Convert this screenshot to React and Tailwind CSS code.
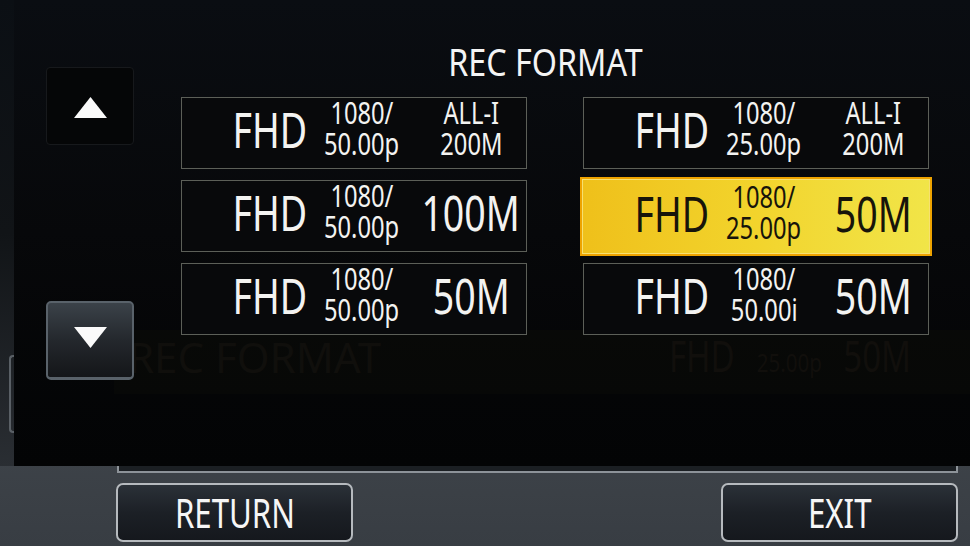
import React from "react";

const FONT = "font-['Noto_Sans','Open_Sans',sans-serif]";

function Tri({ down }) {
  return (
    <svg width="33" height="21" viewBox="0 0 33 21">
      {down ? (
        <polygon points="0,0 33,0 16.5,21" fill="#fafafa" />
      ) : (
        <polygon points="16.5,0 33,21 0,21" fill="#fafafa" />
      )}
    </svg>
  );
}

function Big({ children }) {
  return <span className="inline-block whitespace-nowrap scale-x-[0.75]">{children}</span>;
}

function Small({ children }) {
  return <span className="inline-block whitespace-nowrap scale-x-[0.79]">{children}</span>;
}

function Cell({ a, b, c, c2, selected }) {
  const two = c2 !== undefined;
  const outer = selected
    ? "-mx-[3px] -mt-[3px] -mb-[4px] h-[79px] border-2 border-[#eea300] bg-gradient-to-r from-[#efc01a] via-[#f2d42c] to-[#f1e548] text-[#17140a] shadow-[inset_0_0_0_1px_#f7e070]"
    : "h-[72px] border-[1.5px] border-[#5c5f58] bg-[#08090b] text-[#f3f3f1]";
  return (
    <div className={`${outer} flex items-center justify-center`}>
      <div className="w-[346px] h-[72px] shrink-0 flex">
        <div className="ml-[36px] w-[105px] flex justify-center pt-[7px] text-[50px] leading-[50px]">
          <Big>{a}</Big>
        </div>
        <div className="-ml-[4px] w-[88px] flex flex-col items-center text-[30px] leading-[31px]">
          <Small>1080/</Small>
          <Small>{b}</Small>
        </div>
        {two ? (
          <div className="ml-[9px] w-[112px] flex flex-col items-center text-[30px] leading-[31px]">
            <Small>{c}</Small>
            <Small>{c2}</Small>
          </div>
        ) : (
          <div className="ml-[9px] w-[112px] flex justify-center pt-[7px] text-[50px] leading-[50px]">
            <Big>{c}</Big>
          </div>
        )}
      </div>
    </div>
  );
}

function BottomButton({ children }) {
  return (
    <div className="w-[237px] h-[59px] rounded-[7px] border-2 border-[#b6babe] bg-gradient-to-b from-[#2b3138] via-[#1c2026] to-[#15181d] flex items-center justify-center text-[40px] leading-[40px] text-[#f6f6f6]">
      <span className="inline-block whitespace-nowrap scale-x-[0.78]">{children}</span>
    </div>
  );
}

export default function App() {
  return (
    <div
      className={`${FONT} w-[970px] h-[546px] overflow-hidden flex flex-col bg-gradient-to-b from-[#50565c] via-[#474d53] to-[#383d43] font-normal`}
    >
      {/* main dark area */}
      <div className="h-[466px] flex shrink-0">
        {/* left edge strip */}
        <div className="w-[14px] bg-gradient-to-b from-[#0b0f14] via-[#111417] to-[#2a2e33] flex flex-col">
          <div className="mt-[355px] ml-[9px] w-[5px] h-[78px] rounded-l-[4px] border-l-2 border-y-2 border-[#5a6066]" />
        </div>
        {/* black panel */}
        <div className="relative flex-1 flex bg-gradient-to-b from-[#0a0d12] via-[#07080a] to-[#030405]">
          {/* faint reflections */}
          <div className="absolute left-[100px] top-[330px] w-[856px] h-[64px] bg-[#120f0b] opacity-30" />
          <div className="absolute left-[114px] top-[336px] text-[42px] leading-[42px] whitespace-nowrap text-[#100f0c]">
            REC FORMAT
          </div>
          <div className="absolute left-[644px] top-[333px] flex items-end gap-[2px] text-[#110f0c]">
            <span className="text-[44px] leading-[44px] inline-block scale-x-[0.75]">FHD</span>
            <span className="text-[26px] leading-[26px] pb-[2px] inline-block scale-x-[0.79]">25.00p</span>
            <span className="text-[44px] leading-[44px] inline-block scale-x-[0.75]">50M</span>
          </div>

          {/* nav buttons */}
          <div className="relative ml-[32px] w-[88px] flex flex-col">
            <div className="mt-[67px] h-[78px] rounded-[4px] border border-[#17191c] bg-[#050607] flex items-center justify-center pt-[2px]">
              <Tri />
            </div>
            <div className="mt-[156px] h-[79px] rounded-[5px] border-2 border-b-[3px] border-[#59626a] bg-gradient-to-b from-[#3b4249] via-[#24282d] to-[#141619] flex items-center justify-center pb-[6px]">
              <Tri down />
            </div>
          </div>

          {/* content */}
          <div className="relative ml-[47px] w-[748px] flex flex-col">
            <div className="h-[97px] pt-[42px] pr-[20px] flex justify-center text-[38px] leading-[38px] text-[#f4f4f4]">
              <span className="inline-block whitespace-nowrap scale-x-[0.85]">REC FORMAT</span>
            </div>
            <div className="grid grid-cols-[346px_346px] gap-x-[56px] gap-y-[11px]">
              <Cell a="FHD" b="50.00p" c="ALL-I" c2="200M" />
              <Cell a="FHD" b="25.00p" c="ALL-I" c2="200M" />
              <Cell a="FHD" b="50.00p" c="100M" />
              <Cell a="FHD" b="25.00p" c="50M" selected />
              <Cell a="FHD" b="50.00p" c="50M" />
              <Cell a="FHD" b="50.00i" c="50M" />
            </div>
          </div>
        </div>
      </div>

      {/* frame strip */}
      <div className="h-[8px] shrink-0 flex">
        <div className="ml-[117px] w-[841px] h-[7px] border-x-2 border-b-2 border-[#8d9399] bg-[#1b1f23]" />
      </div>

      {/* bottom buttons */}
      <div className="mt-[9px] flex">
        <div className="ml-[116px]">
          <BottomButton>RETURN</BottomButton>
        </div>
        <div className="ml-[368px]">
          <BottomButton>EXIT</BottomButton>
        </div>
      </div>
    </div>
  );
}
